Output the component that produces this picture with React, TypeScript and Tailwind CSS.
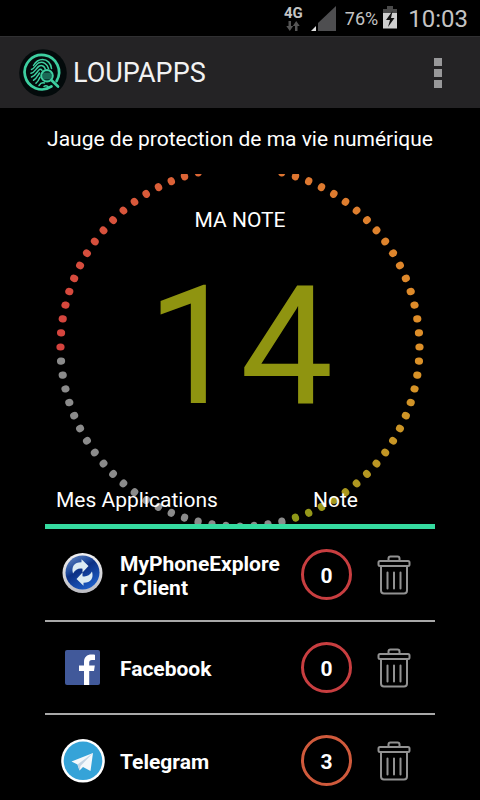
import type { ReactNode } from "react";

const apps = [
  { name: "MyPhoneExplorer Client", note: 0, icon: SyncIcon, ring: "border-[#c83e40]" },
  { name: "Facebook", note: 0, icon: FacebookIcon, ring: "border-[#c83e40]" },
  { name: "Telegram", note: 3, icon: TelegramIcon, ring: "border-[#d05a3c]" },
];

const DOTS = 80;
const SCORE = 14;
const MAX_SCORE = 20;

// gauge colours, clockwise from the left side
const stops: [number, number[]][] = [
  [0, [213, 67, 62]],
  [10, [215, 82, 60]],
  [20, [222, 112, 50]],
  [40, [222, 144, 40]],
  [47, [200, 150, 38]],
  [56, [143, 152, 24]],
];

function dotColor(i: number) {
  if (i > (DOTS * SCORE) / MAX_SCORE) return "#8b8b8b";
  const n = Math.max(1, stops.findIndex(([at]) => at >= i));
  const [a, from] = stops[n - 1];
  const [b, to] = stops[n];
  const t = (i - a) / (b - a);
  return `rgb(${from.map((c, k) => Math.round(c + (to[k] - c) * t)).join(",")})`;
}

function Gauge() {
  return (
    <svg viewBox="0 0 390 350" className="col-start-1 row-start-1 w-[390px] h-[350px] max-w-full" aria-hidden="true">
      {Array.from({ length: DOTS }, (_, i) => (
        <ellipse
          key={i}
          cx="15.5"
          cy="173"
          rx="4.1"
          ry="3.6"
          fill={dotColor(i)}
          transform={`rotate(${(i * 360) / DOTS} 195 173)`}
        />
      ))}
    </svg>
  );
}

function Logo() {
  return (
    <svg viewBox="0 0 48 48" className="w-12 h-12" fill="none" stroke="#3dcfa0" strokeLinecap="round">
      <circle cx="24" cy="24" r="23.8" fill="#030a0b" stroke="none" />
      <path d="M32.5 37.4A17.2 17.2 0 1 1 37.600 32" strokeWidth="2.700" />
      <g strokeWidth="1.5">
        <path d="M14.500 16.500c2-3.500 5-6 9-6 5 0 8.500 4 9 9" />
        <path d="M12.500 20.500c3-.8 4-5 7.500-6.800 4-1.700 8.500 1.300 9.500 5.800" />
        <path d="M12 24.300c4-.8 5-5.300 8.300-7.300 2.500-1.300 5 .2 6 3" />
        <path d="M12.500 28c4.500-1.200 5.500-5.700 8-7.500 1.200-.6 2 0 2.500.8" />
        <path d="M14.500 31.300c3-1.300 4-4.300 6-7.300" />
        <path d="M17 34.200c2-1.500 3-3.700 4-6" />
        <path d="M20 36.500c1.500-2.500 3-3.500 5.500-2.500M25 37.300c1.500-.8 3-.5 4 .3" />
      </g>
      <circle cx="28" cy="26.800" r="5.800" fill="#0a3a33" strokeWidth="2" />
      <path d="M24.500 25h7M23.500 27h9M24.500 29h7" stroke="#2a9a7a" strokeWidth="1" />
      <path d="M32.500 31.300l6.500 6.200" strokeWidth="2.700" />
    </svg>
  );
}

function SyncIcon() {
  return (
    <svg viewBox="0 0 42 44" className="w-[42px] h-11">
      <defs>
        <linearGradient id="rim" x1="0" y1="0" x2="0" y2="1">
          <stop offset="0" stopColor="#f2f2f4" />
          <stop offset="1" stopColor="#bcbcc2" />
        </linearGradient>
        <linearGradient id="blue" x1="0" y1="0" x2="0.6" y2="1">
          <stop offset="0" stopColor="#6f8fc4" />
          <stop offset="0.4" stopColor="#1f4a9c" />
          <stop offset="0.5" stopColor="#0c3084" />
          <stop offset="1" stopColor="#1d5cc4" />
        </linearGradient>
      </defs>
      <circle cx="20.500" cy="20" r="20" fill="url(#rim)" />
      <circle cx="20.500" cy="19.500" r="17" fill="url(#blue)" />
      <g fill="#dcebf3">
        <path d="M11 20.500C9 13.500 12.500 9 19.500 9.200V6.300L26.500 13l-6 6.500v-3.700c-4-.8-7 .7-9.500 4.700z" />
        <path d="M30 18.500C32 25.500 28.500 30 21.500 29.800V32.700L14.500 26l6-6.500v3.700c4 .8 7-.7 9.500-4.700z" />
      </g>
    </svg>
  );
}

function FacebookIcon() {
  return (
    <svg viewBox="0 0 35 35" className="w-[35px] h-[35px]">
      <rect width="35" height="35" rx="2" fill="#41599a" />
      <path
        d="M19 35V21h-5v-5.500h5V12c0-5 3-7.500 7.500-7.500 1.800 0 3 .1 3.500.2V10h-3c-2.200 0-2.800 1.200-2.800 2.800v2.700h5.600l-.8 5.500h-4.800v14z"
        fill="#fff"
      />
    </svg>
  );
}

function TelegramIcon() {
  return (
    <svg viewBox="0 0 44 44" className="w-11 h-11">
      <circle cx="22" cy="21.800" r="21.800" fill="#fff" />
      <circle cx="22" cy="21.800" r="19.300" fill="#35a3d8" />
      <path d="M10.500 22.500L32 14 29.500 32 22 28 18.500 31.500 16.500 25.500z" fill="#f4f8fb" />
      <path d="M16.500 25.500L32 14 19.500 27 18.500 31.500z" fill="#c3d4e4" />
    </svg>
  );
}

function TrashIcon() {
  return (
    <svg viewBox="0 0 34 40" className="w-[34px] h-10" fill="none" stroke="#929292" strokeWidth="2">
      <path d="M11.500 6V3.500a2 2 0 0 1 2-2h7a2 2 0 0 1 2 2V6" />
      <rect x="1.500" y="6" width="31" height="5" rx="1.500" />
      <path d="M4 11v24.500a3 3 0 0 0 3 3h20a3 3 0 0 0 3-3V11" />
      <path d="M10.500 17.500v16M17 17.500v16M23.500 17.500v16" strokeLinecap="round" />
    </svg>
  );
}

function StatusBar() {
  return (
    <div className="flex h-9 items-center justify-end pr-3 text-[#c4c4c4]">
      <div className="flex flex-col items-center">
        <span className="text-[15px] leading-4 font-bold">4G</span>
        <svg viewBox="0 0 14 10" className="w-3.5 h-2.5" fill="#555">
          <path d="M2.500 0h2.500v5h2.200L3.800 10 .3 5h2.200zM9 10h2.500V5h2.200L10.200 0 6.800 5H9z" />
        </svg>
      </div>
      <svg viewBox="0 0 26 26" className="ml-2 w-[26px] h-[26px]">
        <path d="M7 26V18L25 1v25z" fill="#4e4e50" />
        <path d="M0 26l5-5v5z" fill="#e0e0e0" />
      </svg>
      <span className="ml-2 pt-0.5 text-[18px] leading-6">76%</span>
      <svg viewBox="0 0 16 24" className="ml-1 w-4 h-6">
        <path d="M5 0h6v3h4v5H1V3h4z" fill="#4a4a4a" />
        <path d="M1 7h14v15.500H1z" fill="#cfcfcf" />
        <path d="M10.500 5L4 14h4l-2 7 6.500-9H9z" fill="#101010" />
      </svg>
      <span className="ml-2.5 pt-0.5 text-[24px] leading-8">10:03</span>
    </div>
  );
}

function Cell({ className = "", children }: { className?: string; children: ReactNode }) {
  return <td className={`border-b-2 border-[#a8a8a8] ${className}`}>{children}</td>;
}

export default function App() {
  return (
    <div className="h-screen overflow-hidden bg-black font-['Roboto',sans-serif] text-white">
      <StatusBar />

      <header className="flex h-[72px] items-center justify-between border-t border-[#303032] bg-[#242325] pl-[19px] pr-8">
        <div className="flex items-center gap-1.5">
          <Logo />
          <h1 className="text-[27px] leading-8 text-[#f2f2f2]">LOUPAPPS</h1>
        </div>
        <button aria-label="Menu" className="flex flex-col gap-[3px] p-1.5">
          <span className="size-2 bg-[#98989a]" />
          <span className="size-2 bg-[#98989a]" />
          <span className="size-2 bg-[#98989a]" />
        </button>
      </header>

      <main className="px-[45px]">
        <h2 className="flex h-[66px] items-center justify-center pb-1 text-[21px] leading-6 whitespace-nowrap">
          Jauge de protection de ma vie numérique
        </h2>

        <section className="grid h-[350px] justify-center overflow-hidden">
          <Gauge />
          <div className="col-start-1 row-start-1 flex flex-col items-center pt-[34px]">
            <span className="text-[21px] leading-6">MA NOTE</span>
            <span className="mt-[15px] text-[166px] leading-[200px] text-[#8f9410]">{SCORE}</span>
          </div>
        </section>

        <table className="relative -mt-[43px] w-full table-fixed border-separate border-spacing-0">
          <colgroup>
            <col className="w-[75px]" />
            <col />
            <col className="w-[51px]" />
            <col className="w-[83px]" />
          </colgroup>
          <thead>
            <tr className="h-12 text-left text-[21px] leading-6">
              <th colSpan={2} className="border-b-5 border-[#35dba0] pb-1.5 pl-[11px] font-normal">
                Mes Applications
              </th>
              <th colSpan={2} className="border-b-5 border-[#35dba0] pb-1.5 pl-3 font-normal">
                Note
              </th>
            </tr>
          </thead>
          <tbody>
            {apps.map((app) => (
              <tr key={app.name} className="h-[93px]">
                <Cell>
                  <div className="flex justify-center">
                    <app.icon />
                  </div>
                </Cell>
                <Cell className="pt-0.5 pr-4 text-[21px] leading-6 font-bold wrap-anywhere">{app.name}</Cell>
                <Cell>
                  <div className={`flex size-[51px] items-center justify-center rounded-full border-3 pt-0.5 text-[21px] leading-6 font-bold ${app.ring}`}>
                    {app.note}
                  </div>
                </Cell>
                <Cell>
                  <button aria-label={`Supprimer ${app.name}`} className="flex w-full justify-center">
                    <TrashIcon />
                  </button>
                </Cell>
              </tr>
            ))}
          </tbody>
        </table>
      </main>
    </div>
  );
}
